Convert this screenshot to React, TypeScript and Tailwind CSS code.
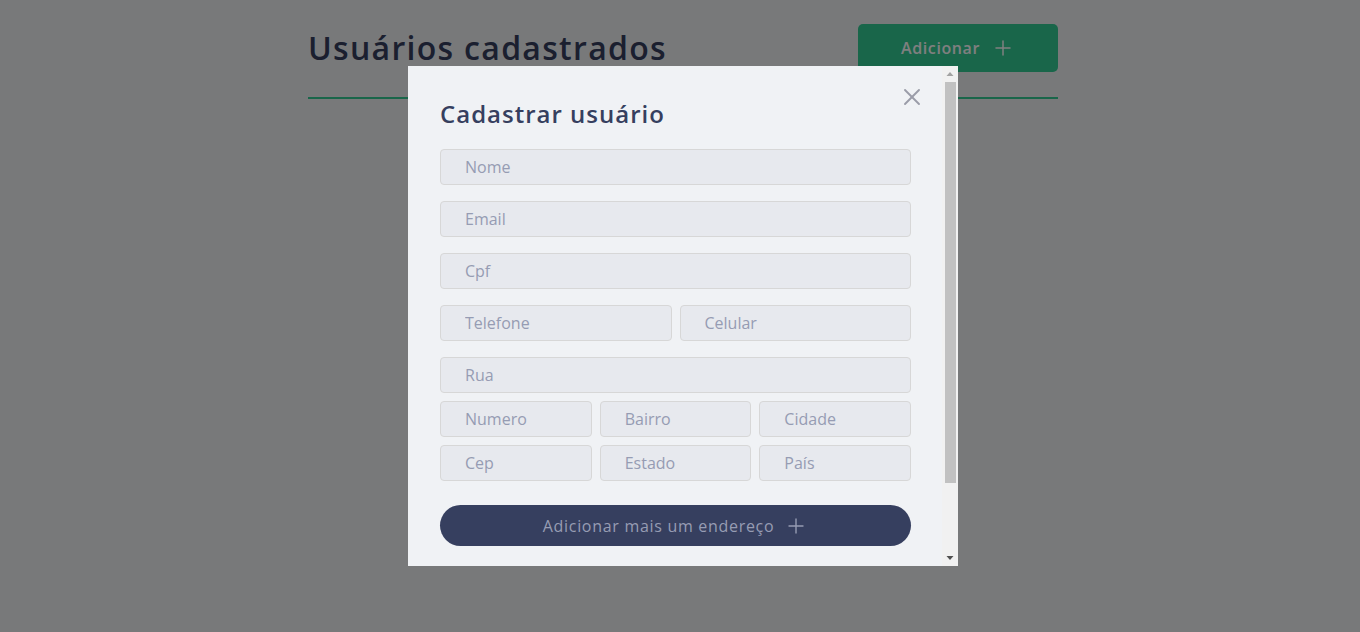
import { X, Plus } from 'lucide-react';

const font = { fontFamily: '"Open Sans", "Noto Sans", sans-serif' };

function Field({ placeholder }: { placeholder: string }) {
  return (
    <input
      type="text"
      placeholder={placeholder}
      className="h-9 w-full min-w-0 rounded-[4px] border border-[#d7d7d7] bg-[#e7e9ee] pl-6 text-base text-[#363f5f] outline-none placeholder:text-[#969cb3]"
    />
  );
}

// the modal's scrollbar (classic style, top of the content)
function ScrollBar() {
  return (
    <div className="flex w-4 shrink-0 flex-col bg-[#f1f1f1]">
      <div className="flex h-4 items-center justify-center">
        <svg width="16" height="16" viewBox="0 0 16 16">
          <path d="M4.5 10h7L8 6z" fill="#a3a3a3" />
        </svg>
      </div>
      <div className="flex-1 pb-[67px] pl-[3px] pr-[2px]">
        <div className="h-full bg-[#c1c1c1]" />
      </div>
      <div className="flex h-4 items-center justify-center">
        <svg width="16" height="16" viewBox="0 0 16 16">
          <path d="M4.5 6h7L8 10z" fill="#505050" />
        </svg>
      </div>
    </div>
  );
}

export default function App() {
  return (
    <div className="relative min-h-screen bg-[#f0f2f5]" style={font}>
      {/* page behind the modal */}
      <div className="flex justify-center pl-[6px] pt-6">
        <div className="w-[750px]">
          <header className="flex items-center justify-between border-b-2 border-[#33cc95] pb-[25px]">
            <h1 className="text-[32px] font-semibold tracking-[1.3px] text-[#363f5f]">Usuários cadastrados</h1>
            <button className="flex h-12 w-[200px] items-center justify-center gap-[11px] rounded-[5px] bg-[#33cc95] font-semibold tracking-[0.6px] text-white">
              Adicionar
              <Plus size={24} strokeWidth={1.5} />
            </button>
          </header>
        </div>
      </div>

      {/* overlay */}
      <div className="fixed inset-0 flex items-center justify-center bg-black/50 pl-[6px]">
        <div className="flex h-[500px] w-[550px] bg-[#f0f2f5]">
          <div className="relative min-w-0 flex-1 overflow-hidden pl-8 pr-[31px] pt-8">
            <button className="absolute right-[16px] top-[17px] text-[#9a9ca8]">
              <X size={28} strokeWidth={1.6} />
            </button>
            <h2 className="mb-[19px] text-2xl font-semibold tracking-[1px] text-[#363f5f]">Cadastrar usuário</h2>
            <form className="flex flex-col">
              <div className="flex flex-col gap-4">
                <Field placeholder="Nome" />
                <Field placeholder="Email" />
                <Field placeholder="Cpf" />
                <div className="grid grid-cols-2 gap-2">
                  <Field placeholder="Telefone" />
                  <Field placeholder="Celular" />
                </div>
              </div>
              <div className="mt-4 flex flex-col gap-2">
                <Field placeholder="Rua" />
                <div className="grid grid-cols-3 gap-2">
                  <Field placeholder="Numero" />
                  <Field placeholder="Bairro" />
                  <Field placeholder="Cidade" />
                </div>
                <div className="grid grid-cols-3 gap-2">
                  <Field placeholder="Cep" />
                  <Field placeholder="Estado" />
                  <Field placeholder="País" />
                </div>
              </div>
              <button
                type="button"
                className="mt-6 flex h-[41px] w-full items-center justify-center gap-[10px] rounded-full bg-[#363f5f] text-base tracking-[0.7px] text-[#969cb3]"
              >
                Adicionar mais um endereço
                <Plus size={24} strokeWidth={1.4} />
              </button>
            </form>
          </div>
          <ScrollBar />
        </div>
      </div>
    </div>
  );
}
